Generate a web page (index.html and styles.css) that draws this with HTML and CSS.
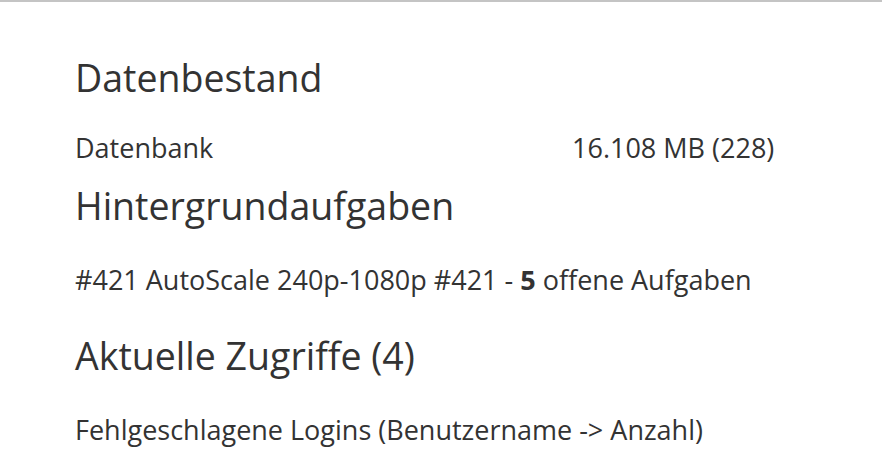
FILE: index.html
```html
<!DOCTYPE html>
<html lang="de">
<head>
  <meta charset="UTF-8">
  <title>Status</title>
  <link rel="stylesheet" href="styles.css">
</head>
<body>
  <div class="content">
    <h2>Datenbestand</h2>
    <div class="stats">
      <span>Datenbank</span>
      <span>16.108 MB (228)</span>
    </div>

    <h2>Hintergrundaufgaben</h2>
    <p>#421 AutoScale 240p-1080p #421 - <b>5</b> offene Aufgaben</p>

    <h2>Aktuelle Zugriffe (4)</h2>
    <p>Fehlgeschlagene Logins (Benutzername -&gt; Anzahl)</p>
  </div>
</body>
</html>
```

FILE: styles.css
```css
body { margin: 0; border-top: 2px solid #c4c4c4; font-family: "Open Sans", sans-serif; color: #333; background: #fff; }
.content { padding: 54px 75px 0; }
h2 { font-size: 37.5px; font-weight: 400; line-height: 44px; margin: 0 0 36px; }
.stats { display: grid; grid-template-columns: 497px auto; font-size: 27px; line-height: 32px; margin: -4px 0 20px; }
p { font-size: 27px; line-height: 32px; margin: 0 0 38px; }
b { font-weight: 700; }
```
